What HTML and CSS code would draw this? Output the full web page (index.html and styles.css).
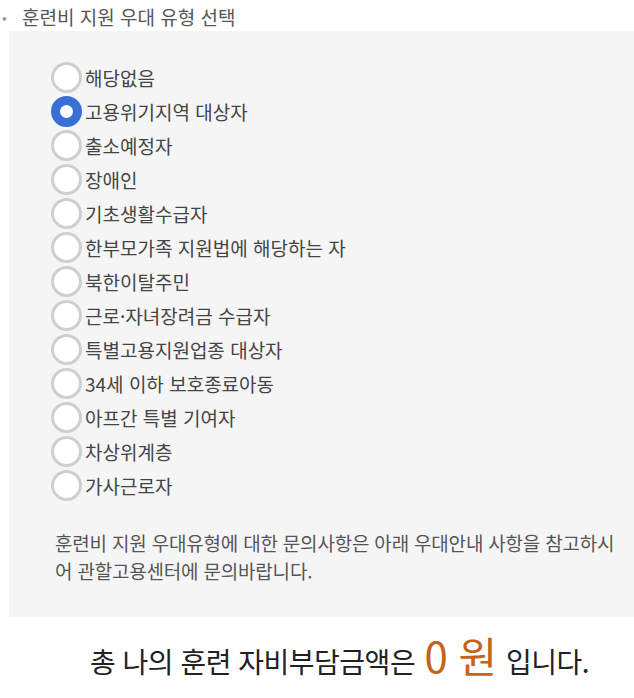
FILE: index.html
```html
<!DOCTYPE html>
<html lang="ko">
<head>
  <meta charset="UTF-8">
  <meta name="viewport" content="width=device-width, initial-scale=1.0">
  <title>훈련비 지원 우대 유형 선택</title>
  <link rel="stylesheet" href="styles.css">
</head>
<body>
  <div class="section">
    <h3 class="title">훈련비 지원 우대 유형 선택</h3>
    <div class="box">
      <ul class="radios">
        <li><label><input type="radio" name="pref"><span>해당없음</span></label></li>
        <li><label><input type="radio" name="pref" checked><span>고용위기지역 대상자</span></label></li>
        <li><label><input type="radio" name="pref"><span>출소예정자</span></label></li>
        <li><label><input type="radio" name="pref"><span>장애인</span></label></li>
        <li><label><input type="radio" name="pref"><span>기초생활수급자</span></label></li>
        <li><label><input type="radio" name="pref"><span>한부모가족 지원법에 해당하는 자</span></label></li>
        <li><label><input type="radio" name="pref"><span>북한이탈주민</span></label></li>
        <li><label><input type="radio" name="pref"><span>근로·자녀장려금 수급자</span></label></li>
        <li><label><input type="radio" name="pref"><span>특별고용지원업종 대상자</span></label></li>
        <li><label><input type="radio" name="pref"><span>34세 이하 보호종료아동</span></label></li>
        <li><label><input type="radio" name="pref"><span>아프간 특별 기여자</span></label></li>
        <li><label><input type="radio" name="pref"><span>차상위계층</span></label></li>
        <li><label><input type="radio" name="pref"><span>가사근로자</span></label></li>
      </ul>
      <p class="notice">훈련비 지원 우대유형에 대한 문의사항은 아래 우대안내 사항을 참고하시어 관할고용센터에 문의바랍니다.</p>
    </div>
    <p class="total">총 나의 훈련 자비부담금액은 <strong>0 원</strong> 입니다.</p>
  </div>
</body>
</html>
```

FILE: styles.css
```css
body { margin: 0; background: #fff; font-family: "Noto Sans CJK KR", "Noto Sans", sans-serif; color: #444; }
.section { padding: 0 0 0 9px; }
.title { margin: 0; height: 31px; font-size: 19px; font-weight: 400; color: #555; line-height: 34px; position: relative; padding-left: 13px; }
.title::before { content: "•"; position: absolute; left: -7px; top: 0; color: #999; font-size: 14px; }
.box { background: #f5f5f5; padding: 29px 8px 32px 42px; }
.radios { list-style: none; margin: 0; padding: 0; }
.radios li { height: 34px; }
.radios label { display: flex; align-items: center; height: 34px; font-size: 19px; color: #444; }
.radios input { appearance: none; margin: 0 3px 0 0; width: 31px; height: 31px; border-radius: 50%; border: 3px solid #cfcfcf; background: #fff; box-sizing: border-box; flex: none; }
.radios input:checked { border: 9px solid #3a6fd8; }
.notice { margin: 27px 0 0 4px; font-size: 19px; line-height: 28px; color: #555; letter-spacing: -0.2px; }
.total { margin: 16px 0 0 81px; font-size: 28px; color: #222; letter-spacing: -0.5px; line-height: 44px; }
.total strong { font-weight: 400; font-size: 42px; color: #c4621e; margin: 0 2px; }
```
